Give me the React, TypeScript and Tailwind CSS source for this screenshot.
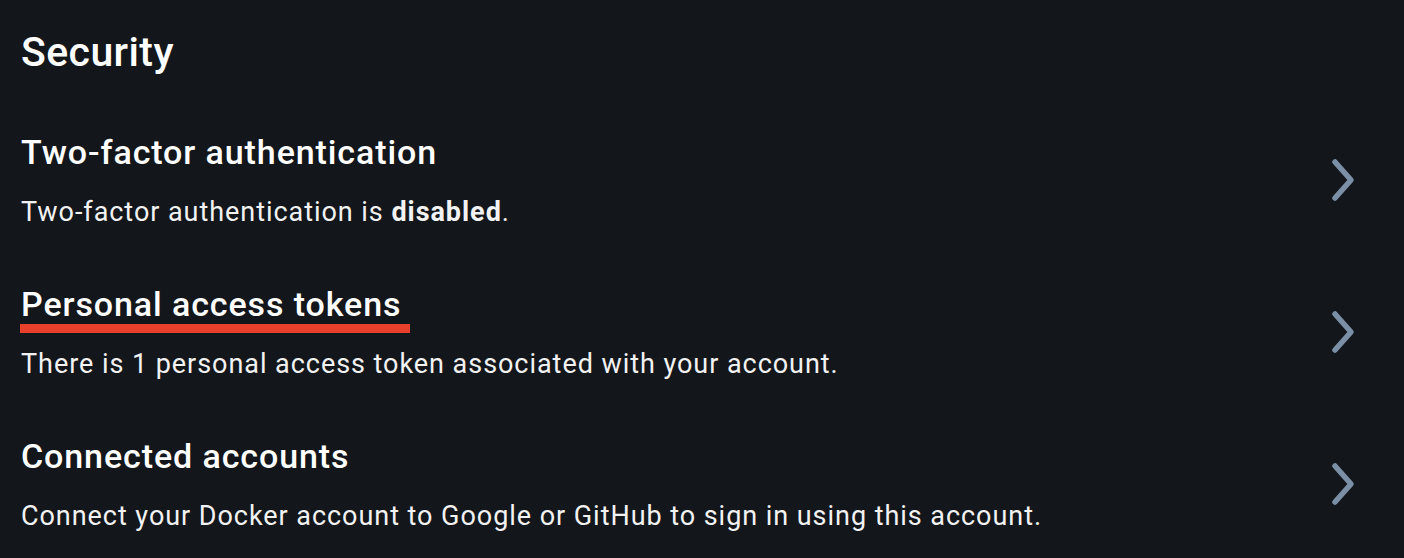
import React from 'react';

type Item = {
  title: string;
  desc: React.ReactNode;
  active?: boolean;
};

const items: Item[] = [
  {
    title: 'Two-factor authentication',
    desc: (
      <>
        Two-factor authentication is <span className="font-bold">disabled</span>.
      </>
    ),
  },
  {
    title: 'Personal access tokens',
    desc: 'There is 1 personal access token associated with your account.',
    active: true,
  },
  {
    title: 'Connected accounts',
    desc: 'Connect your Docker account to Google or GitHub to sign in using this account.',
  },
];

function Chevron() {
  return (
    <svg width="30" height="48" viewBox="0 0 30 48" fill="none" className="shrink-0">
      <path d="M7 6 L23 24 L7 42" stroke="#7b90a7" strokeWidth="5.5" strokeLinecap="round" strokeLinejoin="round" />
    </svg>
  );
}

export default function App() {
  return (
    <div
      className="w-[1404px] h-[558px] bg-[#13161b] text-white pl-[21px] pr-[46px] pt-[26px] overflow-hidden"
      style={{ fontFamily: 'Roboto, "Noto Sans", sans-serif' }}
    >
      <h1 className="text-[41px] leading-[52px] font-medium tracking-[0.4px]">Security</h1>
      <div className="mt-[54px] flex flex-col gap-[56px]">
        {items.map((item) => (
          <div key={item.title} className="flex items-center justify-between">
            <div className="flex flex-col">
              <div className="relative self-start">
                <h2 className="text-[34px] leading-[40px] font-medium tracking-[0.9px]">{item.title}</h2>
                {item.active && (
                  <div className="absolute left-[-1px] right-[-9px] top-[40px] h-[9px] bg-[#e8412b]" />
                )}
              </div>
              <p className="mt-[24px] text-[27px] leading-[32px] tracking-[0.95px] text-[#f2f2f2]">
                {item.desc}
              </p>
            </div>
            <Chevron />
          </div>
        ))}
      </div>
    </div>
  );
}
